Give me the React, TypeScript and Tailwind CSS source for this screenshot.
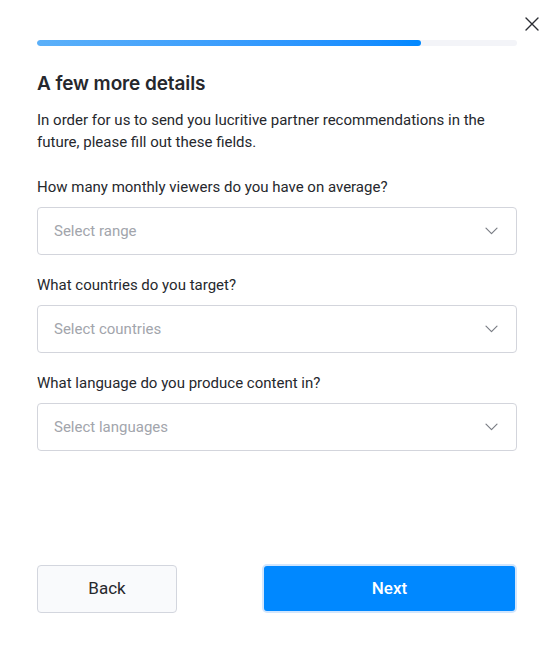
import React from 'react';

const fields = [
  { label: 'How many monthly viewers do you have on average?', placeholder: 'Select range' },
  { label: 'What countries do you target?', placeholder: 'Select countries' },
  { label: 'What language do you produce content in?', placeholder: 'Select languages' },
];

const Chevron = () => (
  <svg width="13" height="8" viewBox="0 0 13 8" fill="none" className="text-[#7a7d85]">
    <path d="M1 1.2l5.5 5.5 5.5-5.5" stroke="currentColor" strokeWidth="1.2" strokeLinecap="round" strokeLinejoin="round" />
  </svg>
);

export default function App() {
  return (
    <div className="relative w-[553px] h-[651px] bg-white pl-[37px] pr-[36px] flex flex-col font-['Roboto',sans-serif] text-[#222429]">
      {/* close */}
      <button className="absolute top-[16px] right-[13px] w-[16px] h-[16px] flex items-center justify-center">
        <svg width="14" height="14" viewBox="0 0 14 14" fill="none">
          <path d="M1 1l12 12M13 1L1 13" stroke="#2b2d33" strokeWidth="1.4" strokeLinecap="round" />
        </svg>
      </button>

      {/* progress */}
      <div className="mt-[40px] h-[6px] w-full rounded-full bg-[#f3f4f8] overflow-hidden">
        <div className="h-full w-[80%] rounded-full bg-gradient-to-r from-[#5bb0f9] to-[#0088ff]" />
      </div>

      <h1 className="mt-[25px] text-[19px] leading-[26px] font-semibold font-['Inter',sans-serif] tracking-[-0.1px] text-[#26282d]">
        A few more details
      </h1>
      <p className="mt-[12px] text-[15px] leading-[22px] text-[#26282d]">
        In order for us to send you lucritive partner recommendations in the future, please fill out these fields.
      </p>

      <div className="mt-[23px] flex flex-col gap-[19px]">
        {fields.map((f) => (
          <div key={f.label} className="flex flex-col">
            <label className="text-[15px] leading-[22px] text-[#26282d]">{f.label}</label>
            <div className="mt-[9px] h-[48px] rounded-[4px] border border-[#d3d5dc] flex items-center justify-between pl-[16px] pr-[18px]">
              <span className="text-[15px] text-[#a2a5ac]">{f.placeholder}</span>
              <Chevron />
            </div>
          </div>
        ))}
      </div>

      <div className="mt-auto mb-[38px] flex justify-between items-center">
        <button className="w-[140px] h-[48px] rounded-[4px] border border-[#d3d6de] bg-[#f9fafc] text-[17px] text-[#26282d]">
          Back
        </button>
        <button className="w-[255px] h-[49px] rounded-[5px] border-2 border-[#d2e6fd] bg-[#0088ff] text-[17px] font-medium text-white">
          Next
        </button>
      </div>
    </div>
  );
}
